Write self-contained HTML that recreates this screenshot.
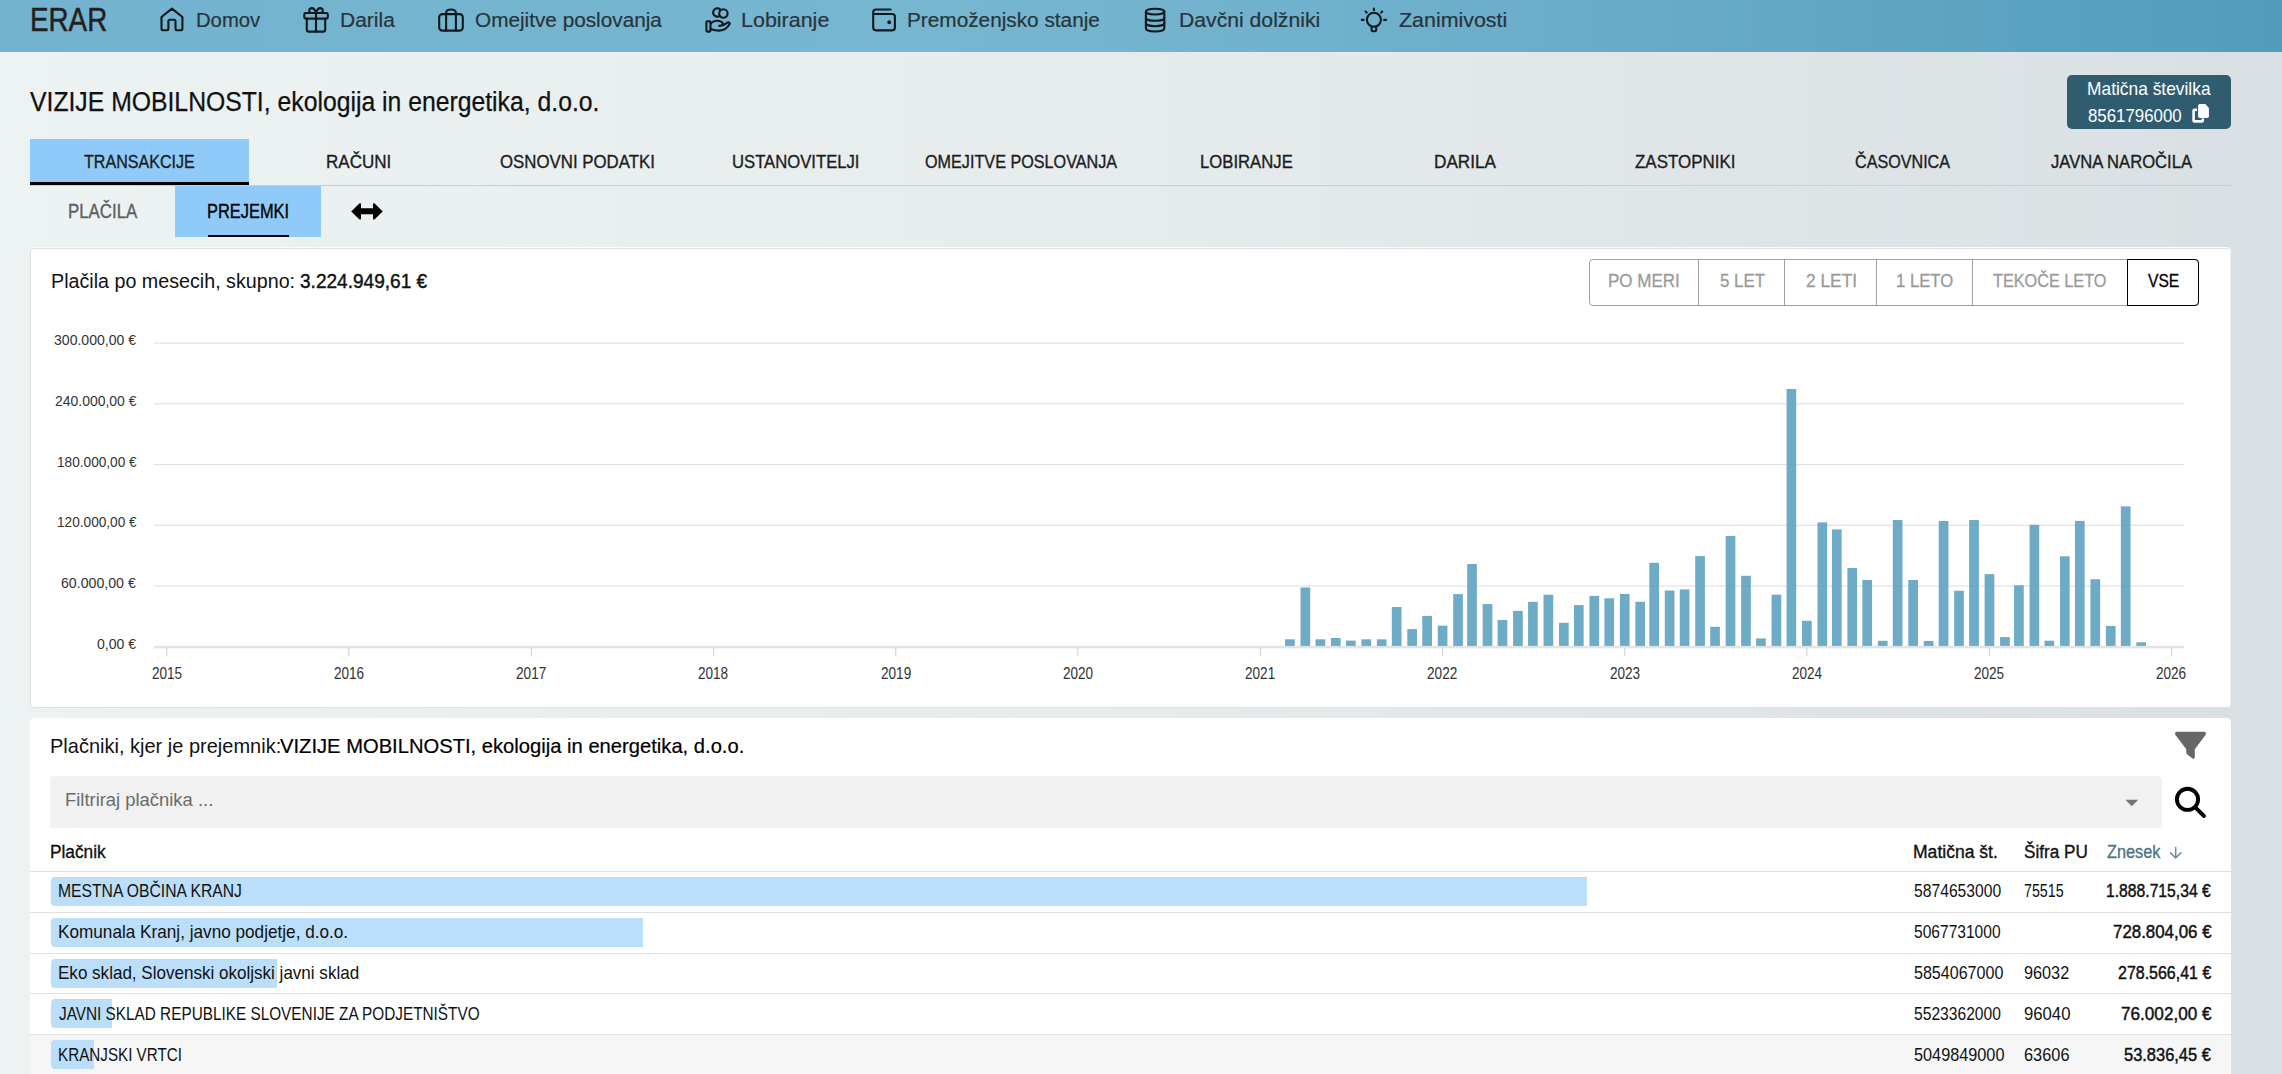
<!DOCTYPE html>
<html><head><meta charset="utf-8">
<style>
html,body{margin:0;padding:0;}
body{width:2282px;height:1074px;overflow:hidden;position:relative;font-family:"Liberation Sans",sans-serif;background:linear-gradient(90deg,#edf2f3 0%,#e6ebec 50%,#d9e0e3 100%);}
.t{position:absolute;white-space:pre;line-height:1;transform-origin:0 0;}
.abs{position:absolute;}
svg{position:absolute;overflow:visible;}
</style></head><body>
<!-- header -->
<div class="abs" style="left:0;top:0;width:2282px;height:52px;background:linear-gradient(90deg,#73b3cf 0%,#77b6d0 42%,#6caecb 66%,#60a6c4 82%,#519cbd 100%);"></div>
<svg style="left:0;top:0" width="2282" height="52" fill="none" stroke="#11191d" stroke-width="2.1" stroke-linecap="round" stroke-linejoin="round">
 <!-- home -->
 <path d="M161.5 17 L171.9 8.6 L182.4 17 V29 Q182.4 30.2 181.2 30.2 H176.7 Q175.5 30.2 175.5 29 V21 Q175.5 19.8 174.3 19.8 H169.6 Q168.4 19.8 168.4 21 V29 Q168.4 30.2 167.2 30.2 H162.7 Q161.5 30.2 161.5 29 Z"/>
 <!-- gift -->
 <rect x="304.3" y="13" width="23.5" height="5.6" rx="1.4"/>
 <path d="M306.8 18.6 V29.4 Q306.8 31.6 309 31.6 H323 Q325.2 31.6 325.2 29.4 V18.6"/>
 <path d="M316 13 V31.6"/>
 <path d="M316 13 Q314.6 8.1 311.9 8.1 Q309.1 8.2 309.2 10.7 Q309.4 12.9 311.2 13"/>
 <path d="M316 13 Q317.4 8.1 320.1 8.1 Q322.9 8.2 322.8 10.7 Q322.6 12.9 320.8 13"/>
 <!-- briefcase -->
 <rect x="439.2" y="14.1" width="23.6" height="16.5" rx="3.2"/>
 <path d="M446.1 30.6 V13 Q446.1 9.5 451 9.5 Q455.9 9.5 455.9 13 V30.6"/>
 <!-- lobby hand coins -->
 <path d="M720.81 10.2 A4.2 4.2 0 1 0 719.89 15.8"/>
 <circle cx="723.4" cy="13.5" r="4.2"/>
 <rect x="706.4" y="21.2" width="4.1" height="10.4" rx="1"/>
 <path d="M710.5 23.5 Q714 20.5 717.5 20.8 Q722.5 21.2 723 24 Q722.5 25.9 719.2 25.9"/>
 <path d="M723.5 25.2 L727 22.8 Q729.5 21.6 729.8 23.8 Q726 30.5 719.5 30.6 Q715 30.5 710.5 28.9"/>
 <!-- wallet -->
 <path d="M890.6 9.5 H876 Q873.2 9.5 873.2 12.3 V27.6 Q873.2 30.4 876 30.4 H892.1 Q894.9 30.4 894.9 27.6 V16.8 Q894.9 14 892.1 14 H873.2"/>
 <circle cx="889.2" cy="22.2" r="0.9" fill="#11191d"/>
 <!-- database -->
 <ellipse cx="1155.1" cy="11.6" rx="9.2" ry="2.9"/>
 <path d="M1145.9 11.6 V28.6 A9.2 2.9 0 0 0 1164.3 28.6 V11.6"/>
 <path d="M1145.9 17.9 A9.2 2.9 0 0 0 1164.3 17.9"/>
 <path d="M1145.9 23.3 A9.2 2.9 0 0 0 1164.3 23.3"/>
 <!-- bulb -->
 <circle cx="1373.9" cy="19.8" r="7"/>
 <path d="M1371.6 26.4 V29.9 Q1371.6 31.3 1373 31.3 H1374.8 Q1376.2 31.3 1376.2 29.9 V26.4"/>
 <path d="M1373.9 8.6 V10.2 M1361.8 19.9 H1363.6 M1384.2 19.9 H1386 M1365.6 11.6 L1366.6 12.6 M1382.2 11.6 L1381.2 12.6"/>
</svg>
<!-- id box -->
<div class="abs" style="left:2067px;top:75px;width:164px;height:54px;border-radius:5px;background:#305c70;"></div>
<svg style="left:0;top:0" width="2282" height="140">
 <path d="M2197 109.8 H2194.6 Q2193.6 109.8 2193.6 110.8 V120.4 Q2193.6 121.4 2194.6 121.4 H2201.8 Q2202.8 121.4 2202.8 120.4 V118.6" fill="none" stroke="#fff" stroke-width="2.6"/>
 <path d="M2199.9 104 H2205.3 L2208.9 108 V116.3 Q2208.9 118 2207.2 118 H2199.9 Q2198.1 118 2198.1 116.3 V105.8 Q2198.1 104 2199.9 104 Z" fill="#fff"/>
</svg>
<!-- tabs -->
<div class="abs" style="left:30px;top:139px;width:219px;height:46px;background:#90caf9;"></div>
<div class="abs" style="left:30px;top:182px;width:219px;height:3px;background:#000;"></div>
<div class="abs" style="left:30px;top:185px;width:2201px;height:1px;background:#c9ced1;"></div>
<div class="abs" style="left:175px;top:186px;width:146px;height:50.6px;background:#90caf9;"></div>
<div class="abs" style="left:208px;top:234.6px;width:81px;height:2px;background:#000;"></div>
<svg style="left:0;top:0" width="400" height="240">
 <path d="M351.2 211.4 L359.3 203.6 Q361 202.4 361 204.6 V208.2 H373 V204.6 Q373 202.4 374.7 203.6 L382.7 211.4 L374.7 219.2 Q373 220.4 373 218.2 V214.2 H361 V218.2 Q361 220.4 359.3 219.2 Z" fill="#000"/>
</svg>
<!-- card 1 -->
<div class="abs" style="left:30px;top:248px;width:2199px;height:458px;background:#fff;border:1px solid #e0e0e0;border-right-color:#f0f0f0;border-radius:4px;box-shadow:0 -1px 0 #fafbfb;"></div>
<!-- button group -->
<div class="abs" style="left:1588.5px;top:259px;width:608px;height:44.6px;border:1px solid #a0a0a0;border-radius:4px;"></div>
<div class="abs" style="left:1698.2px;top:259px;width:1px;height:46.6px;background:#a0a0a0;"></div>
<div class="abs" style="left:1784.3px;top:259px;width:1px;height:46.6px;background:#a0a0a0;"></div>
<div class="abs" style="left:1876.1px;top:259px;width:1px;height:46.6px;background:#a0a0a0;"></div>
<div class="abs" style="left:1972.3px;top:259px;width:1px;height:46.6px;background:#a0a0a0;"></div>
<div class="abs" style="left:2126.6px;top:259px;width:70px;height:44.6px;border:1px solid #000;border-radius:0 4px 4px 0;"></div>
<svg style="left:0;top:0" width="2282" height="720"><rect x="154" y="342.50" width="2030" height="1.2" fill="#e2e2e2"/><rect x="154" y="403.22" width="2030" height="1.2" fill="#e2e2e2"/><rect x="154" y="463.94" width="2030" height="1.2" fill="#e2e2e2"/><rect x="154" y="524.66" width="2030" height="1.2" fill="#e2e2e2"/><rect x="154" y="585.38" width="2030" height="1.2" fill="#e2e2e2"/><rect x="154" y="645.8" width="2030" height="2.6" fill="#e3e3e3"/><rect x="166.10" y="648" width="1.2" height="8" fill="#d6d6d6"/><rect x="348.23" y="648" width="1.2" height="8" fill="#d6d6d6"/><rect x="530.85" y="648" width="1.2" height="8" fill="#d6d6d6"/><rect x="712.98" y="648" width="1.2" height="8" fill="#d6d6d6"/><rect x="895.11" y="648" width="1.2" height="8" fill="#d6d6d6"/><rect x="1077.24" y="648" width="1.2" height="8" fill="#d6d6d6"/><rect x="1259.86" y="648" width="1.2" height="8" fill="#d6d6d6"/><rect x="1441.99" y="648" width="1.2" height="8" fill="#d6d6d6"/><rect x="1624.12" y="648" width="1.2" height="8" fill="#d6d6d6"/><rect x="1806.25" y="648" width="1.2" height="8" fill="#d6d6d6"/><rect x="1988.87" y="648" width="1.2" height="8" fill="#d6d6d6"/><rect x="2171.00" y="648" width="1.2" height="8" fill="#d6d6d6"/><rect x="1285.05" y="639.30" width="9.7" height="6.60" fill="#5a9fbe" fill-opacity="0.88"/><rect x="1300.52" y="587.50" width="9.7" height="58.40" fill="#5a9fbe" fill-opacity="0.88"/><rect x="1315.49" y="639.30" width="9.7" height="6.60" fill="#5a9fbe" fill-opacity="0.88"/><rect x="1330.96" y="638.00" width="9.7" height="7.90" fill="#5a9fbe" fill-opacity="0.88"/><rect x="1345.93" y="640.60" width="9.7" height="5.30" fill="#5a9fbe" fill-opacity="0.88"/><rect x="1361.40" y="639.30" width="9.7" height="6.60" fill="#5a9fbe" fill-opacity="0.88"/><rect x="1376.87" y="639.30" width="9.7" height="6.60" fill="#5a9fbe" fill-opacity="0.88"/><rect x="1391.83" y="607.00" width="9.7" height="38.90" fill="#5a9fbe" fill-opacity="0.88"/><rect x="1407.30" y="629.10" width="9.7" height="16.80" fill="#5a9fbe" fill-opacity="0.88"/><rect x="1422.27" y="615.90" width="9.7" height="30.00" fill="#5a9fbe" fill-opacity="0.88"/><rect x="1437.74" y="625.70" width="9.7" height="20.20" fill="#5a9fbe" fill-opacity="0.88"/><rect x="1453.21" y="594.10" width="9.7" height="51.80" fill="#5a9fbe" fill-opacity="0.88"/><rect x="1467.18" y="564.00" width="9.7" height="81.90" fill="#5a9fbe" fill-opacity="0.88"/><rect x="1482.65" y="604.10" width="9.7" height="41.80" fill="#5a9fbe" fill-opacity="0.88"/><rect x="1497.62" y="620.00" width="9.7" height="25.90" fill="#5a9fbe" fill-opacity="0.88"/><rect x="1513.09" y="610.90" width="9.7" height="35.00" fill="#5a9fbe" fill-opacity="0.88"/><rect x="1528.06" y="601.80" width="9.7" height="44.10" fill="#5a9fbe" fill-opacity="0.88"/><rect x="1543.52" y="594.70" width="9.7" height="51.20" fill="#5a9fbe" fill-opacity="0.88"/><rect x="1558.99" y="622.80" width="9.7" height="23.10" fill="#5a9fbe" fill-opacity="0.88"/><rect x="1573.96" y="605.10" width="9.7" height="40.80" fill="#5a9fbe" fill-opacity="0.88"/><rect x="1589.43" y="595.90" width="9.7" height="50.00" fill="#5a9fbe" fill-opacity="0.88"/><rect x="1604.40" y="598.30" width="9.7" height="47.60" fill="#5a9fbe" fill-opacity="0.88"/><rect x="1619.87" y="593.90" width="9.7" height="52.00" fill="#5a9fbe" fill-opacity="0.88"/><rect x="1635.34" y="601.80" width="9.7" height="44.10" fill="#5a9fbe" fill-opacity="0.88"/><rect x="1649.31" y="562.80" width="9.7" height="83.10" fill="#5a9fbe" fill-opacity="0.88"/><rect x="1664.78" y="590.50" width="9.7" height="55.40" fill="#5a9fbe" fill-opacity="0.88"/><rect x="1679.75" y="589.40" width="9.7" height="56.50" fill="#5a9fbe" fill-opacity="0.88"/><rect x="1695.21" y="556.10" width="9.7" height="89.80" fill="#5a9fbe" fill-opacity="0.88"/><rect x="1710.18" y="626.80" width="9.7" height="19.10" fill="#5a9fbe" fill-opacity="0.88"/><rect x="1725.65" y="535.90" width="9.7" height="110.00" fill="#5a9fbe" fill-opacity="0.88"/><rect x="1741.12" y="575.80" width="9.7" height="70.10" fill="#5a9fbe" fill-opacity="0.88"/><rect x="1756.09" y="638.40" width="9.7" height="7.50" fill="#5a9fbe" fill-opacity="0.88"/><rect x="1771.56" y="594.70" width="9.7" height="51.20" fill="#5a9fbe" fill-opacity="0.88"/><rect x="1786.53" y="389.00" width="9.7" height="256.90" fill="#5a9fbe" fill-opacity="0.88"/><rect x="1802.00" y="620.80" width="9.7" height="25.10" fill="#5a9fbe" fill-opacity="0.88"/><rect x="1817.46" y="522.40" width="9.7" height="123.50" fill="#5a9fbe" fill-opacity="0.88"/><rect x="1831.93" y="529.40" width="9.7" height="116.50" fill="#5a9fbe" fill-opacity="0.88"/><rect x="1847.40" y="568.00" width="9.7" height="77.90" fill="#5a9fbe" fill-opacity="0.88"/><rect x="1862.37" y="580.00" width="9.7" height="65.90" fill="#5a9fbe" fill-opacity="0.88"/><rect x="1877.84" y="640.80" width="9.7" height="5.10" fill="#5a9fbe" fill-opacity="0.88"/><rect x="1892.81" y="520.00" width="9.7" height="125.90" fill="#5a9fbe" fill-opacity="0.88"/><rect x="1908.28" y="580.00" width="9.7" height="65.90" fill="#5a9fbe" fill-opacity="0.88"/><rect x="1923.75" y="640.90" width="9.7" height="5.00" fill="#5a9fbe" fill-opacity="0.88"/><rect x="1938.72" y="521.00" width="9.7" height="124.90" fill="#5a9fbe" fill-opacity="0.88"/><rect x="1954.18" y="590.70" width="9.7" height="55.20" fill="#5a9fbe" fill-opacity="0.88"/><rect x="1969.15" y="520.00" width="9.7" height="125.90" fill="#5a9fbe" fill-opacity="0.88"/><rect x="1984.62" y="574.10" width="9.7" height="71.80" fill="#5a9fbe" fill-opacity="0.88"/><rect x="2000.09" y="637.10" width="9.7" height="8.80" fill="#5a9fbe" fill-opacity="0.88"/><rect x="2014.06" y="585.30" width="9.7" height="60.60" fill="#5a9fbe" fill-opacity="0.88"/><rect x="2029.53" y="524.80" width="9.7" height="121.10" fill="#5a9fbe" fill-opacity="0.88"/><rect x="2044.50" y="640.70" width="9.7" height="5.20" fill="#5a9fbe" fill-opacity="0.88"/><rect x="2059.97" y="556.30" width="9.7" height="89.60" fill="#5a9fbe" fill-opacity="0.88"/><rect x="2074.94" y="520.90" width="9.7" height="125.00" fill="#5a9fbe" fill-opacity="0.88"/><rect x="2090.41" y="579.20" width="9.7" height="66.70" fill="#5a9fbe" fill-opacity="0.88"/><rect x="2105.87" y="625.90" width="9.7" height="20.00" fill="#5a9fbe" fill-opacity="0.88"/><rect x="2120.84" y="506.40" width="9.7" height="139.50" fill="#5a9fbe" fill-opacity="0.88"/><rect x="2136.31" y="642.30" width="9.7" height="3.60" fill="#5a9fbe" fill-opacity="0.88"/></svg>
<!-- card 2 -->
<div class="abs" style="left:30px;top:718px;width:2201px;height:400px;background:#fff;border-radius:4px;"></div>
<div style="position:absolute;left:30px;top:1034.8px;width:2201px;height:40px;background:#f6f6f6"></div><div style="position:absolute;left:30px;top:871.20px;width:2201px;height:1px;background:#e0e0e0"></div><div style="position:absolute;left:30px;top:912.10px;width:2201px;height:1px;background:#e0e0e0"></div><div style="position:absolute;left:30px;top:952.80px;width:2201px;height:1px;background:#e0e0e0"></div><div style="position:absolute;left:30px;top:992.90px;width:2201px;height:1px;background:#e0e0e0"></div><div style="position:absolute;left:30px;top:1033.80px;width:2201px;height:1px;background:#e0e0e0"></div><div style="position:absolute;left:51px;top:877.30px;width:1536px;height:28.7px;background:#bbdefb;border-radius:4px 0 0 4px"></div><div style="position:absolute;left:51px;top:918.20px;width:592px;height:28.7px;background:#bbdefb;border-radius:4px 0 0 4px"></div><div style="position:absolute;left:51px;top:958.90px;width:226px;height:28.7px;background:#bbdefb;border-radius:4px 0 0 4px"></div><div style="position:absolute;left:51px;top:999.00px;width:61px;height:28.7px;background:#bbdefb;border-radius:4px 0 0 4px"></div><div style="position:absolute;left:51px;top:1039.90px;width:43px;height:28.7px;background:#bbdefb;border-radius:4px 0 0 4px"></div>
<!-- filter input -->
<div class="abs" style="left:50px;top:776px;width:2112px;height:51.6px;background:#f1f1f1;border-radius:4px 4px 0 0;"></div>
<svg style="left:0;top:700px" width="2282" height="150">
 <path d="M2125.4 99.7 H2138.2 L2131.8 106.3 Z" fill="#757575"/>
 <path d="M2176.5 31.8 H2204.5 Q2206.8 32.5 2205.5 35 L2194.8 49.2 V57 Q2194.8 59.6 2192.6 58.4 L2187.6 54.8 Q2186.3 53.8 2186.3 52.3 V49.2 L2175.5 35 Q2174.2 32.5 2176.5 31.8 Z" fill="#666"/>
 <circle cx="2187.5" cy="99.3" r="10.6" fill="none" stroke="#000" stroke-width="3.9"/>
 <path d="M2196.3 108.4 L2204 116" stroke="#000" stroke-width="3.9" stroke-linecap="round"/>
 <path d="M2175.7 147.6 V158 M2170.6 152.9 L2175.7 158 L2180.8 152.9" fill="none" stroke="#6b8f9c" stroke-width="1.5" stroke-linecap="round" stroke-linejoin="round"/>
</svg>
<div class="t" style="left:30.21px;top:4.00px;font-size:32.70px;color:#231f20;transform:scaleX(0.8501);-webkit-text-stroke:0.5px #231f20;">ERAR</div>
<div class="t" style="left:196.33px;top:9.00px;font-size:21.08px;color:#27343a;transform:scaleX(0.9605);-webkit-text-stroke:0.2px #27343a;">Domov</div>
<div class="t" style="left:339.97px;top:9.00px;font-size:21.08px;color:#27343a;transform:scaleX(0.9959);-webkit-text-stroke:0.2px #27343a;">Darila</div>
<div class="t" style="left:475.01px;top:9.00px;font-size:21.08px;color:#27343a;transform:scaleX(0.9847);-webkit-text-stroke:0.2px #27343a;">Omejitve poslovanja</div>
<div class="t" style="left:741.13px;top:9.00px;font-size:21.08px;color:#27343a;transform:scaleX(1.0186);-webkit-text-stroke:0.2px #27343a;">Lobiranje</div>
<div class="t" style="left:907.49px;top:9.00px;font-size:21.08px;color:#27343a;transform:scaleX(0.9860);-webkit-text-stroke:0.2px #27343a;">Premoženjsko stanje</div>
<div class="t" style="left:1178.65px;top:9.00px;font-size:21.08px;color:#27343a;transform:scaleX(1.0043);-webkit-text-stroke:0.2px #27343a;">Davčni dolžniki</div>
<div class="t" style="left:1398.70px;top:9.00px;font-size:21.08px;color:#27343a;transform:scaleX(1.0155);-webkit-text-stroke:0.2px #27343a;">Zanimivosti</div>
<div class="t" style="left:29.88px;top:88.00px;font-size:27.62px;color:#111;transform:scaleX(0.8963);-webkit-text-stroke:0.25px #111;">VIZIJE MOBILNOSTI, ekologija in energetika, d.o.o.</div>
<div class="t" style="left:2087.17px;top:79.00px;font-size:19.04px;color:#fff;transform:scaleX(0.9126);">Matična številka</div>
<div class="t" style="left:2087.88px;top:106.00px;font-size:19.04px;color:#fff;transform:scaleX(0.8855);">8561796000</div>
<div class="t" style="left:84.04px;top:153.00px;font-size:18.90px;color:#1c1c1c;transform:scaleX(0.8506);-webkit-text-stroke:0.35px #1c1c1c;">TRANSAKCIJE</div>
<div class="t" style="left:325.69px;top:153.00px;font-size:18.90px;color:#1c1c1c;transform:scaleX(0.9015);-webkit-text-stroke:0.35px #1c1c1c;">RAČUNI</div>
<div class="t" style="left:499.80px;top:153.00px;font-size:18.90px;color:#1c1c1c;transform:scaleX(0.8903);-webkit-text-stroke:0.35px #1c1c1c;">OSNOVNI PODATKI</div>
<div class="t" style="left:732.01px;top:153.00px;font-size:18.90px;color:#1c1c1c;transform:scaleX(0.8823);-webkit-text-stroke:0.35px #1c1c1c;">USTANOVITELJI</div>
<div class="t" style="left:925.03px;top:153.00px;font-size:18.90px;color:#1c1c1c;transform:scaleX(0.8568);-webkit-text-stroke:0.35px #1c1c1c;">OMEJITVE POSLOVANJA</div>
<div class="t" style="left:1200.22px;top:153.00px;font-size:18.90px;color:#1c1c1c;transform:scaleX(0.8836);-webkit-text-stroke:0.35px #1c1c1c;">LOBIRANJE</div>
<div class="t" style="left:1433.69px;top:153.00px;font-size:18.90px;color:#1c1c1c;transform:scaleX(0.9077);-webkit-text-stroke:0.35px #1c1c1c;">DARILA</div>
<div class="t" style="left:1634.55px;top:153.00px;font-size:18.90px;color:#1c1c1c;transform:scaleX(0.8966);-webkit-text-stroke:0.35px #1c1c1c;">ZASTOPNIKI</div>
<div class="t" style="left:1855.09px;top:153.00px;font-size:18.90px;color:#1c1c1c;transform:scaleX(0.8540);-webkit-text-stroke:0.35px #1c1c1c;">ČASOVNICA</div>
<div class="t" style="left:2051.15px;top:153.00px;font-size:18.90px;color:#1c1c1c;transform:scaleX(0.8800);-webkit-text-stroke:0.35px #1c1c1c;">JAVNA NAROČILA</div>
<div class="t" style="left:67.51px;top:202.00px;font-size:19.62px;color:#5e5e5e;transform:scaleX(0.8599);-webkit-text-stroke:0.35px #5e5e5e;">PLAČILA</div>
<div class="t" style="left:207.04px;top:202.00px;font-size:19.62px;color:#000;transform:scaleX(0.8376);-webkit-text-stroke:0.35px #000;">PREJEMKI</div>
<div class="t" style="left:50.98px;top:271.00px;font-size:20.35px;color:#111;transform:scaleX(0.9678);">Plačila po mesecih, skupno:</div>
<div class="t" style="left:299.59px;top:271.00px;font-size:20.35px;color:#111;transform:scaleX(0.9365);-webkit-text-stroke:0.4px #111;">3.224.949,61 €</div>
<div class="t" style="left:1608.30px;top:272.00px;font-size:18.60px;color:#9a9a9a;transform:scaleX(0.9150);-webkit-text-stroke:0.3px #9a9a9a;">PO MERI</div>
<div class="t" style="left:1720.12px;top:272.00px;font-size:18.60px;color:#9a9a9a;transform:scaleX(0.9079);-webkit-text-stroke:0.3px #9a9a9a;">5 LET</div>
<div class="t" style="left:1805.63px;top:272.00px;font-size:18.60px;color:#9a9a9a;transform:scaleX(0.9321);-webkit-text-stroke:0.3px #9a9a9a;">2 LETI</div>
<div class="t" style="left:1895.75px;top:272.00px;font-size:18.60px;color:#9a9a9a;transform:scaleX(0.8977);-webkit-text-stroke:0.3px #9a9a9a;">1 LETO</div>
<div class="t" style="left:1993.33px;top:272.00px;font-size:18.60px;color:#9a9a9a;transform:scaleX(0.8732);-webkit-text-stroke:0.3px #9a9a9a;">TEKOČE LETO</div>
<div class="t" style="left:2147.72px;top:272.00px;font-size:18.60px;color:#000;transform:scaleX(0.8413);-webkit-text-stroke:0.3px #000;">VSE</div>
<div class="t" style="left:54.17px;top:333.00px;font-size:14.83px;color:#333;transform:scaleX(0.9475);">300.000,00 €</div>
<div class="t" style="left:54.80px;top:394.00px;font-size:14.83px;color:#333;transform:scaleX(0.9402);">240.000,00 €</div>
<div class="t" style="left:56.58px;top:455.00px;font-size:14.83px;color:#333;transform:scaleX(0.9197);">180.000,00 €</div>
<div class="t" style="left:56.58px;top:515.00px;font-size:14.83px;color:#333;transform:scaleX(0.9197);">120.000,00 €</div>
<div class="t" style="left:61.39px;top:576.00px;font-size:14.83px;color:#333;transform:scaleX(0.9549);">60.000,00 €</div>
<div class="t" style="left:97.04px;top:637.00px;font-size:14.83px;color:#333;transform:scaleX(0.9496);">0,00 €</div>
<div class="t" style="left:151.57px;top:666.00px;font-size:15.70px;color:#333;transform:scaleX(0.8633);">2015</div>
<div class="t" style="left:333.70px;top:666.00px;font-size:15.70px;color:#333;transform:scaleX(0.8643);">2016</div>
<div class="t" style="left:516.32px;top:666.00px;font-size:15.70px;color:#333;transform:scaleX(0.8674);">2017</div>
<div class="t" style="left:698.45px;top:666.00px;font-size:15.70px;color:#333;transform:scaleX(0.8643);">2018</div>
<div class="t" style="left:880.58px;top:666.00px;font-size:15.70px;color:#333;transform:scaleX(0.8654);">2019</div>
<div class="t" style="left:1062.71px;top:666.00px;font-size:15.70px;color:#333;transform:scaleX(0.8623);">2020</div>
<div class="t" style="left:1245.33px;top:666.00px;font-size:15.70px;color:#333;transform:scaleX(0.8664);">2021</div>
<div class="t" style="left:1427.46px;top:666.00px;font-size:15.70px;color:#333;transform:scaleX(0.8674);">2022</div>
<div class="t" style="left:1609.59px;top:666.00px;font-size:15.70px;color:#333;transform:scaleX(0.8643);">2023</div>
<div class="t" style="left:1791.72px;top:666.00px;font-size:15.70px;color:#333;transform:scaleX(0.8583);">2024</div>
<div class="t" style="left:1974.34px;top:666.00px;font-size:15.70px;color:#333;transform:scaleX(0.8633);">2025</div>
<div class="t" style="left:2156.47px;top:666.00px;font-size:15.70px;color:#333;transform:scaleX(0.8643);">2026</div>
<div class="t" style="left:49.75px;top:737.00px;font-size:19.62px;color:#111;transform:scaleX(1.0199);">Plačniki, kjer je prejemnik:</div>
<div class="t" style="left:280.40px;top:737.00px;font-size:19.62px;color:#000;transform:scaleX(1.0290);-webkit-text-stroke:0.2px #000;">VIZIJE MOBILNOSTI, ekologija in energetika, d.o.o.</div>
<div class="t" style="left:64.78px;top:791.00px;font-size:18.90px;color:#6b6b6b;transform:scaleX(0.9739);">Filtriraj plačnika ...</div>
<div class="t" style="left:49.97px;top:844.00px;font-size:17.88px;color:#111;transform:scaleX(0.9673);-webkit-text-stroke:0.35px #111;">Plačnik</div>
<div class="t" style="left:1912.85px;top:844.00px;font-size:17.88px;color:#111;transform:scaleX(0.9825);-webkit-text-stroke:0.35px #111;">Matična št.</div>
<div class="t" style="left:2024.23px;top:844.00px;font-size:17.88px;color:#111;transform:scaleX(0.9587);-webkit-text-stroke:0.35px #111;">Šifra PU</div>
<div class="t" style="left:2107.07px;top:844.00px;font-size:17.88px;color:#4d7686;transform:scaleX(0.9111);-webkit-text-stroke:0.35px #4d7686;">Znesek</div>
<div class="t" style="left:57.81px;top:883.00px;font-size:17.59px;color:#111;transform:scaleX(0.8922);">MESTNA OBČINA KRANJ</div>
<div class="t" style="left:1913.67px;top:883.00px;font-size:17.59px;color:#111;transform:scaleX(0.8919);">5874653000</div>
<div class="t" style="left:2024.29px;top:883.00px;font-size:17.59px;color:#111;transform:scaleX(0.8117);">75515</div>
<div class="t" style="left:2106.42px;top:883.00px;font-size:17.59px;color:#111;transform:scaleX(0.8928);-webkit-text-stroke:0.45px #111;">1.888.715,34 €</div>
<div class="t" style="left:57.68px;top:924.00px;font-size:17.59px;color:#111;transform:scaleX(0.9766);">Komunala Kranj, javno podjetje, d.o.o.</div>
<div class="t" style="left:1913.68px;top:924.00px;font-size:17.59px;color:#111;transform:scaleX(0.8857);">5067731000</div>
<div class="t" style="left:2112.66px;top:924.00px;font-size:17.59px;color:#111;transform:scaleX(0.9600);-webkit-text-stroke:0.45px #111;">728.804,06 €</div>
<div class="t" style="left:57.69px;top:965.00px;font-size:17.59px;color:#111;transform:scaleX(0.9693);">Eko sklad, Slovenski okoljski javni sklad</div>
<div class="t" style="left:1913.66px;top:965.00px;font-size:17.59px;color:#111;transform:scaleX(0.9137);">5854067000</div>
<div class="t" style="left:2024.23px;top:965.00px;font-size:17.59px;color:#111;transform:scaleX(0.9242);">96032</div>
<div class="t" style="left:2117.90px;top:965.00px;font-size:17.59px;color:#111;transform:scaleX(0.9088);-webkit-text-stroke:0.45px #111;">278.566,41 €</div>
<div class="t" style="left:58.87px;top:1006.00px;font-size:17.59px;color:#111;transform:scaleX(0.8722);">JAVNI SKLAD REPUBLIKE SLOVENIJE ZA PODJETNIŠTVO</div>
<div class="t" style="left:1913.67px;top:1006.00px;font-size:17.59px;color:#111;transform:scaleX(0.8888);">5523362000</div>
<div class="t" style="left:2024.21px;top:1006.00px;font-size:17.59px;color:#111;transform:scaleX(0.9494);">96040</div>
<div class="t" style="left:2120.64px;top:1006.00px;font-size:17.59px;color:#111;transform:scaleX(0.9749);-webkit-text-stroke:0.45px #111;">76.002,00 €</div>
<div class="t" style="left:57.84px;top:1047.00px;font-size:17.59px;color:#111;transform:scaleX(0.8655);">KRANJSKI VRTCI</div>
<div class="t" style="left:1913.65px;top:1047.00px;font-size:17.59px;color:#111;transform:scaleX(0.9251);">5049849000</div>
<div class="t" style="left:2024.18px;top:1047.00px;font-size:17.59px;color:#111;transform:scaleX(0.9309);">63606</div>
<div class="t" style="left:2124.34px;top:1047.00px;font-size:17.59px;color:#111;transform:scaleX(0.9350);-webkit-text-stroke:0.45px #111;">53.836,45 €</div>

</body></html>
